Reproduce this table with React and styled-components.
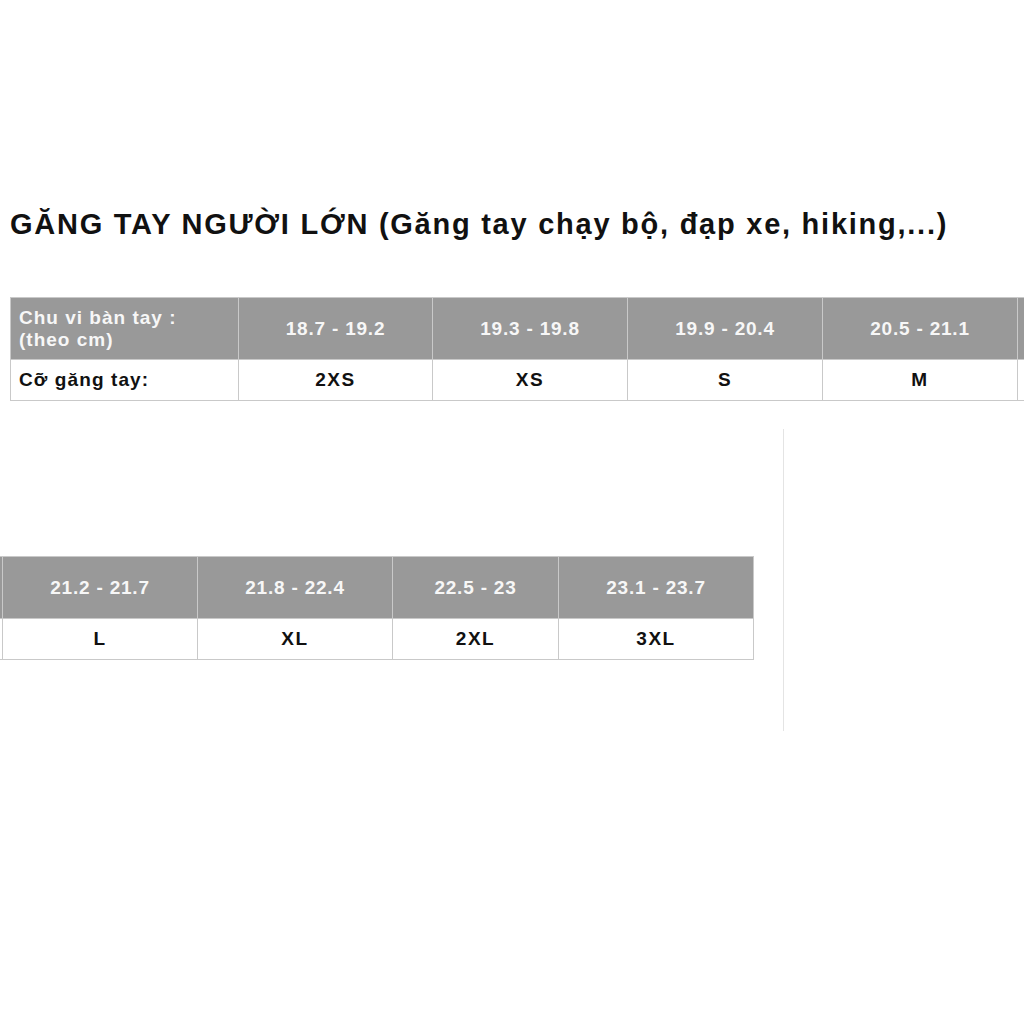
import React from "react";
import styled, { createGlobalStyle } from "styled-components";

const GlobalStyle = createGlobalStyle`
  html, body {
    margin: 0;
    padding: 0;
    background: #fff;
  }
`;

const Page = styled.div`
  width: 1024px;
  height: 1024px;
  overflow: hidden;
  background: #fff;
  font-family: "Liberation Sans", Arial, sans-serif;
  color: #111;
`;

const Title = styled.h1`
  margin: 0;
  padding: 204px 0 0 10px;
  font-size: 29px;
  line-height: 40px;
  font-weight: 700;
  letter-spacing: 1.75px;
  color: #111;
  white-space: nowrap;
`;

const TopTableWrap = styled.div`
  margin-top: 53px;
  padding-left: 10px;
  width: 1100px;
`;

const Table = styled.table`
  border-collapse: collapse;
  table-layout: fixed;
  width: ${(p) => p.$width}px;
  margin-left: ${(p) => p.$shift || 0}px;
`;

const HeadCell = styled.th`
  background: #999999;
  color: #f7f7f7;
  height: 61px;
  padding: 0 8px;
  border: 1px solid #c9c9c9;
  font-size: 19px;
  font-weight: 700;
  letter-spacing: ${(p) => (p.$left ? "1px" : "0.8px")};
  text-align: ${(p) => (p.$left ? "left" : "center")};
  line-height: 22px;
  vertical-align: middle;
`;

const BodyCell = styled.td`
  height: 40px;
  padding: 0 8px;
  border: 1px solid #c9c9c9;
  font-size: 19px;
  font-weight: 700;
  color: #111;
  text-align: ${(p) => (p.$left ? "left" : "center")};
  letter-spacing: ${(p) => (p.$left ? "1.1px" : "1.5px")};
  vertical-align: middle;
`;

const LowerRow = styled.div`
  display: flex;
  align-items: flex-start;
  margin-top: 28px;
`;

const LowerLeft = styled.div`
  width: 783px;
  padding-top: 127px;
  overflow: hidden;
`;

const Divider = styled.div`
  width: 1px;
  height: 302px;
  background: #e4e4e4;
`;

const topRanges = ["18.7 - 19.2", "19.3 - 19.8", "19.9 - 20.4", "20.5 - 21.1", ""];
const topSizes = ["2XS", "XS", "S", "M", ""];
const topCols = [228, 194, 195, 195, 195, 195];

const bottomRanges = ["", "21.2 - 21.7", "21.8 - 22.4", "22.5 - 23", "23.1 - 23.7"];
const bottomSizes = ["", "L", "XL", "2XL", "3XL"];
const bottomCols = [195, 195, 195, 166, 195];

export default function App() {
  return (
    <Page>
      <GlobalStyle />
      <Title>GĂNG TAY NGƯỜI LỚN (Găng tay chạy bộ, đạp xe, hiking,...)</Title>

      <TopTableWrap>
        <Table $width={topCols.reduce((a, b) => a + b, 0)}>
          <colgroup>
            {topCols.map((w, i) => (
              <col key={i} style={{ width: w }} />
            ))}
          </colgroup>
          <thead>
            <tr>
              <HeadCell $left>
                Chu vi bàn tay :<br />
                (theo cm)
              </HeadCell>
              {topRanges.map((r, i) => (
                <HeadCell key={i}>{r}</HeadCell>
              ))}
            </tr>
          </thead>
          <tbody>
            <tr>
              <BodyCell $left>Cỡ găng tay:</BodyCell>
              {topSizes.map((s, i) => (
                <BodyCell key={i}>{s}</BodyCell>
              ))}
            </tr>
          </tbody>
        </Table>
      </TopTableWrap>

      <LowerRow>
        <LowerLeft>
          <Table $width={bottomCols.reduce((a, b) => a + b, 0)} $shift={-193}>
            <colgroup>
              {bottomCols.map((w, i) => (
                <col key={i} style={{ width: w }} />
              ))}
            </colgroup>
            <thead>
              <tr>
                {bottomRanges.map((r, i) => (
                  <HeadCell key={i}>{r}</HeadCell>
                ))}
              </tr>
            </thead>
            <tbody>
              <tr>
                {bottomSizes.map((s, i) => (
                  <BodyCell key={i}>{s}</BodyCell>
                ))}
              </tr>
            </tbody>
          </Table>
        </LowerLeft>
        <Divider />
      </LowerRow>
    </Page>
  );
}
